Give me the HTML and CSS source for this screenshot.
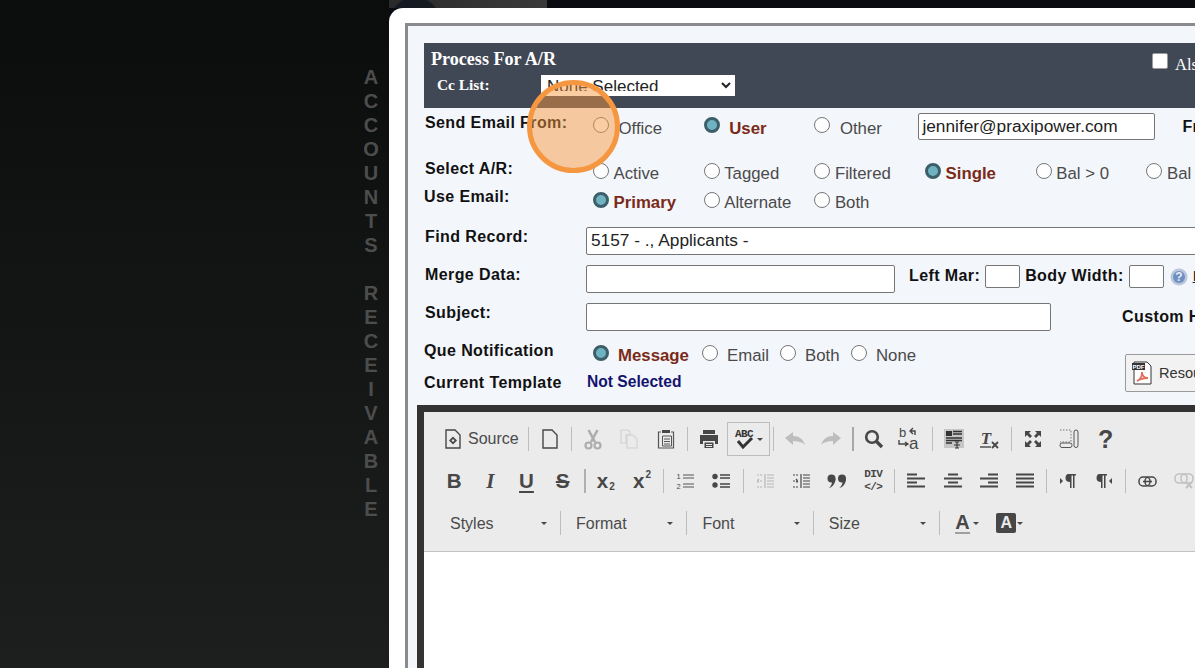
FILE: index.html
```html
<!DOCTYPE html>
<html lang="en">
<head>
<meta charset="utf-8">
<title>Process For A/R</title>
<link rel="stylesheet" href="styles.css">
</head>
<body>
<div class="stage">
  <aside class="side">
    <span>A</span><span>C</span><span>C</span><span>O</span><span>U</span><span>N</span><span>T</span><span>S</span><span>&nbsp;</span><span>R</span><span>E</span><span>C</span><span>E</span><span>I</span><span>V</span><span>A</span><span>B</span><span>L</span><span>E</span>
  </aside>
  <div class="main">
    <div class="topstrip"><div class="strip-left"></div></div>
    <div class="modal">
      <div class="frame">
        <header class="head">
          <div class="head-left">
            <div class="title">Process For A/R</div>
            <div class="cc">
              <span class="cc-label">Cc List:</span>
              <select class="cc-select"><option>None Selected</option></select>
            </div>
          </div>
          <label class="also"><input type="checkbox" class="check"><span>Also send</span></label>
        </header>

        <div class="row row-send">
          <span class="lbl lift">Send Email From:</span>
          <span class="opt o1 gap10"><input type="radio" name="from" class="radio"><span class="otext">Office</span></span>
          <span class="opt o1 gap10"><input type="radio" name="from" class="radio" checked><span class="otext on">User</span></span>
          <span class="opt o2 gap10"><input type="radio" name="from" class="radio"><span class="otext">Other</span></span>
          <input class="field f-email" type="text" value="jennifer@praxipower.com">
          <span class="lbl from">From Name:</span>
        </div>

        <div class="row row-sel">
          <span class="lbl lift">Select A/R:</span>
          <span class="opt o1"><input type="radio" name="ar" class="radio"><span class="otext">Active</span></span>
          <span class="opt o1"><input type="radio" name="ar" class="radio"><span class="otext">Tagged</span></span>
          <span class="opt o1"><input type="radio" name="ar" class="radio"><span class="otext">Filtered</span></span>
          <span class="opt o1"><input type="radio" name="ar" class="radio" checked><span class="otext on">Single</span></span>
          <span class="opt o1"><input type="radio" name="ar" class="radio"><span class="otext">Bal &gt; 0</span></span>
          <span class="opt o1"><input type="radio" name="ar" class="radio"><span class="otext">Bal &lt; 0</span></span>
        </div>

        <div class="row row-use">
          <span class="lbl lift">Use Email:</span>
          <span class="opt o1"><input type="radio" name="use" class="radio" checked><span class="otext on">Primary</span></span>
          <span class="opt o1"><input type="radio" name="use" class="radio"><span class="otext">Alternate</span></span>
          <span class="opt o1"><input type="radio" name="use" class="radio"><span class="otext">Both</span></span>
        </div>

        <div class="row row-find">
          <span class="lbl lift">Find Record:</span>
          <input class="field f-find" type="text" value="5157 - ., Applicants -">
        </div>

        <div class="row row-field">
          <span class="lbl lift">Merge Data:</span>
          <input class="field f-merge" type="text">
          <span class="lbl left-mar">Left Mar:</span>
          <input class="field f-small" type="text">
          <span class="lbl body-w">Body Width:</span>
          <input class="field f-small" type="text">
          <svg class="help" width="18" height="18" viewBox="0 0 18 18" aria-hidden="true"><circle cx="9" cy="9" r="8.5" fill="#b9c6dc"/><circle cx="9" cy="9" r="6" fill="#6f8fc2"/><text x="9" y="13" text-anchor="middle" class="help-q">?</text></svg>
          <span class="help-link">Help</span>
        </div>

        <div class="row row-field">
          <span class="lbl lift">Subject:</span>
          <input class="field f-subject" type="text">
          <span class="lbl custom">Custom Header</span>
        </div>

        <div class="bottom">
          <div class="bottom-left">
            <div class="row row-que">
              <span class="lbl lift">Que Notification</span>
              <span class="opt q1 gap9"><input type="radio" name="que" class="radio" checked><span class="otext on">Message</span></span>
              <span class="opt q2 gap9"><input type="radio" name="que" class="radio"><span class="otext">Email</span></span>
              <span class="opt q3 gap9"><input type="radio" name="que" class="radio"><span class="otext">Both</span></span>
              <span class="opt q4 gap9"><input type="radio" name="que" class="radio"><span class="otext">None</span></span>
            </div>
            <div class="row row-tpl">
              <span class="lbl">Current Template</span>
              <span class="not-sel">Not Selected</span>
            </div>
          </div>
          <button class="res-btn" type="button">
            <svg width="22" height="24" viewBox="0 0 22 24" aria-hidden="true"><path d="M3 1h13l4 4v18H3z" fill="#fff" stroke="#333"/><rect x="1" y="2" width="13" height="7" fill="#333"/><text x="7.500" y="8" text-anchor="middle" class="pdf-t">PDF</text><path d="M6 20c3-1 5-5 5-9 0 4 2 6 6 6-4 0-8 1-11 3z" fill="none" stroke="#e0705f" stroke-width="1.800"/></svg>
            <span>Resources</span>
          </button>
        </div>

        <section class="editor">
          <div class="toolbar">
            <div class="tb-row">
              <span class="b b-source">
                <svg width="16" height="20" viewBox="0 0 16 20"><path d="M1 1h9l5 5v13H1z" class="ln"/><path d="M8 7.500l4 4-4 4-4-4z" fill="#474747"/><path d="M8 10l1.500 1.500L8 13l-1.500-1.500z" fill="#ebebeb"/></svg>
                <span class="b-text">Source</span>
              </span>
              <i class="s"></i>
              <span class="b"><svg width="16" height="20" viewBox="0 0 16 20"><path d="M1 1h9l5 5v13H1z" class="ln"/></svg></span>
              <i class="s"></i>
              <span class="b"><svg width="18" height="21" viewBox="0 0 18 21"><path d="M4.500 1l6.500 12M13.500 1L7 13" stroke="#adadad" stroke-width="2.600" fill="none"/><circle cx="4.500" cy="16.500" r="3" fill="none" stroke="#adadad" stroke-width="2.200"/><circle cx="13.500" cy="16.500" r="3" fill="none" stroke="#adadad" stroke-width="2.200"/></svg></span>
              <span class="b"><svg width="18" height="20" viewBox="0 0 18 20"><path d="M1 1h7l2 2v3H6v8H1z" fill="none" stroke="#d2d2d2" stroke-width="1.200"/><path d="M7 6h6l4 4v9H7z" fill="none" stroke="#d2d2d2" stroke-width="1.200"/></svg></span>
              <span class="b"><svg width="18" height="22" viewBox="0 0 18 22"><path d="M4 4H1.500v16h15V4H14" fill="none" stroke="#555" stroke-width="1.200"/><path d="M5 2h8v3H5z" fill="#474747"/><path d="M5.500 8h9v10h-9z" fill="none" stroke="#555" stroke-width="1"/><path d="M7 11h6M7 13.500h6M7 16h6" stroke="#555" stroke-width="1"/></svg></span>
              <i class="s"></i>
              <span class="b"><svg width="20" height="19" viewBox="0 0 20 19"><path d="M4 0h12v4H4zM1 5h18v9h-3v-3H4v3H1z" fill="#474747"/><path d="M5.500 12.500h9V18h-9z" fill="#474747"/><path d="M7 14h6v1H7zM7 16h6v1H7z" fill="#ebebeb"/></svg></span>
              <span class="b b-spell">
                <svg width="22" height="26" viewBox="0 0 22 26"><text x="10" y="11" text-anchor="middle" class="abc">ABC</text><path d="M4 15l5 6 9-9" fill="none" stroke="#333" stroke-width="3"/></svg>
                <i class="arrow"></i>
              </span>
              <i class="s"></i>
              <span class="b"><svg width="20" height="14" viewBox="0 0 20 14"><path d="M0 6l8-6v4c6 0 10 3 12 9-3-3-7-4-12-4v4z" fill="#bdbdbd"/></svg></span>
              <span class="b"><svg width="20" height="14" viewBox="0 0 20 14"><path d="M20 6l-8-6v4C6 4 2 7 0 13c3-3 7-4 12-4v4z" fill="#bdbdbd"/></svg></span>
              <i class="s s-dark"></i>
              <span class="b"><svg width="20" height="20" viewBox="0 0 20 20"><circle cx="8" cy="8" r="5.800" fill="none" stroke="#474747" stroke-width="2.600"/><path d="M12 12l6 6" stroke="#474747" stroke-width="3.400"/></svg></span>
              <span class="b b-rep"><svg width="22" height="24" viewBox="0 0 22 24"><text x="1" y="10" class="rep">b</text><text x="11" y="22" class="rep rep-a">a</text><path d="M15 1l-3 3 3 3M12 4h5v4" fill="none" stroke="#474747" stroke-width="1.400"/><path d="M7 19l3-2-3-2M1 13v4h8" fill="none" stroke="#474747" stroke-width="1.400"/></svg></span>
              <i class="s"></i>
              <span class="b"><svg width="20" height="20" viewBox="0 0 20 20"><rect width="20" height="19" fill="#c6c6c6"/><path d="M2 2h6v5H2z" fill="#333"/><path d="M9 2.500h9M9 5h9M2 9h16M2 11.500h16M2 14h6" stroke="#333" stroke-width="1.400"/><path d="M10 16h6M13 13v6M11 13h4M11 19h4" stroke="#333" stroke-width="1.100"/></svg></span>
              <span class="b"><svg width="20" height="20" viewBox="0 0 20 20"><text x="6" y="15" text-anchor="middle" class="tx">T</text><path d="M0 18h11" stroke="#474747" stroke-width="1.400"/><path d="M12 13l6 6M18 13l-6 6" stroke="#474747" stroke-width="1.800"/></svg></span>
              <i class="s"></i>
              <span class="b"><svg width="18" height="18" viewBox="0 0 18 18"><path d="M1 1h6L5 3l3 3-2 2-3-3-2 2zM17 1h-6l2 2-3 3 2 2 3-3 2 2zM1 17h6l-2-2 3-3-2-2-3 3-2-2zM17 17h-6l2-2-3-3 2-2 3 3 2-2z" fill="#474747"/></svg></span>
              <span class="b"><svg width="20" height="20" viewBox="0 0 20 20"><path d="M1 1h11v12H1" fill="none" stroke="#777" stroke-dasharray="1.500 1.500"/><rect x="1" y="14" width="12" height="4.500" rx="2" fill="none" stroke="#555"/><rect x="15" y="1" width="4" height="17.500" rx="2" fill="none" stroke="#555"/></svg></span>
              <span class="b b-q">?</span>
            </div>
            <div class="tb-row">
              <span class="b b-fmt">B</span>
              <span class="b b-fmt b-i">I</span>
              <span class="b b-fmt b-u">U</span>
              <span class="b b-fmt b-st">S</span>
              <i class="s s-strong"></i>
              <span class="b b-fmt b-x">x<sub>2</sub></span>
              <span class="b b-fmt b-x">x<sup>2</sup></span>
              <i class="s"></i>
              <span class="b"><svg width="18" height="18" viewBox="0 0 18 18"><text x="2.500" y="7" text-anchor="middle" class="num">1</text><text x="2.500" y="17" text-anchor="middle" class="num">2</text><path d="M7 3h11M7 6h11M7 12h11M7 15h11" stroke="#555" stroke-width="1.100"/></svg></span>
              <span class="b"><svg width="18" height="16" viewBox="0 0 18 16"><circle cx="3" cy="3.500" r="2.700" fill="#474747"/><circle cx="3" cy="12" r="2.700" fill="#474747"/><path d="M8 2h10M8 5h10M8 11h10M8 14h10" stroke="#474747" stroke-width="1.400"/></svg></span>
              <i class="s"></i>
              <span class="b"><svg width="18" height="16" viewBox="0 0 18 16"><path d="M9 1v14M11 2h7M11 5h7M11 8h7M11 11h7M11 14h7" stroke="#b5b5b5" stroke-width="1.200"/><path d="M6 8H1M3 6L1 8l2 2M1 2h5M1 14h5" fill="none" stroke="#b5b5b5" stroke-width="1.200" stroke-dasharray="2 1"/></svg></span>
              <span class="b"><svg width="18" height="16" viewBox="0 0 18 16"><path d="M9 1v14M11 2h7M11 5h7M11 8h7M11 11h7M11 14h7" stroke="#474747" stroke-width="1.200"/><path d="M1 8h5M4 6l2 2-2 2M1 2h5M1 14h5" fill="none" stroke="#474747" stroke-width="1.200" stroke-dasharray="2 1"/></svg></span>
              <span class="b"><svg width="20" height="14" viewBox="0 0 20 14"><circle cx="4.500" cy="4.500" r="4" fill="#474747"/><path d="M8.500 4.500C8.500 9 6 13 2 14c2-2 3-4 3-6z" fill="#474747"/><circle cx="15" cy="4.500" r="4" fill="#474747"/><path d="M19 4.500C19 9 16.500 13 12.500 14c2-2 3-4 3-6z" fill="#474747"/></svg></span>
              <span class="b b-div"><span>DIV</span><span>&lt;/&gt;</span></span>
              <i class="s"></i>
              <span class="b"><svg width="18" height="16" viewBox="0 0 18 16"><path d="M0 1.500h10M0 5.500h18M0 9.500h10M0 13.500h18" stroke="#474747" stroke-width="2"/></svg></span>
              <span class="b"><svg width="18" height="16" viewBox="0 0 18 16"><path d="M4 1.500h10M0 5.500h18M4 9.500h10M0 13.500h18" stroke="#474747" stroke-width="2"/></svg></span>
              <span class="b"><svg width="18" height="16" viewBox="0 0 18 16"><path d="M8 1.500h10M0 5.500h18M8 9.500h10M0 13.500h18" stroke="#474747" stroke-width="2"/></svg></span>
              <span class="b"><svg width="18" height="16" viewBox="0 0 18 16"><path d="M0 1.500h18M0 5.500h18M0 9.500h18M0 13.500h18" stroke="#474747" stroke-width="2"/></svg></span>
              <i class="s"></i>
              <span class="b"><svg width="16" height="16" viewBox="0 0 16 16"><path d="M0 5l3 3-3 3z" fill="#474747"/><path d="M8 1h8v1.500h-1.500V15H13V2.500h-1.500V15H10V9C7 9 5.500 7.500 5.500 5S7 1 8 1z" fill="#474747"/></svg></span>
              <span class="b"><svg width="16" height="16" viewBox="0 0 16 16"><path d="M3 1h8v1.500H9.500V15H8V2.500H6.500V15H5V9C2 9 .5 7.500.5 5S2 1 3 1z" fill="#474747"/><path d="M16 5l-3 3 3 3z" fill="#474747"/></svg></span>
              <i class="s"></i>
              <span class="b"><svg width="19" height="11" viewBox="0 0 19 11"><rect x="1" y="1" width="11" height="9" rx="4" fill="none" stroke="#474747" stroke-width="1.500"/><rect x="7" y="1" width="11" height="9" rx="4" fill="none" stroke="#474747" stroke-width="1.500"/><path d="M5 5.500h9" stroke="#474747" stroke-width="1.500"/></svg></span>
              <span class="b"><svg width="20" height="16" viewBox="0 0 20 16"><rect x="1" y="1" width="12" height="9" rx="4" fill="none" stroke="#c2c2c2" stroke-width="1.600"/><rect x="7" y="1" width="12" height="9" rx="4" fill="none" stroke="#c2c2c2" stroke-width="1.600"/><path d="M12 9l6 6M18 9l-6 6" stroke="#c2c2c2" stroke-width="2"/></svg></span>
            </div>
            <div class="tb-row">
              <span class="combo combo-first">Styles<i class="arrow"></i></span>
              <i class="s s-tall"></i>
              <span class="combo">Format<i class="arrow"></i></span>
              <i class="s s-tall"></i>
              <span class="combo">Font<i class="arrow"></i></span>
              <i class="s s-tall"></i>
              <span class="combo">Size<i class="arrow"></i></span>
              <i class="s s-tall"></i>
              <span class="b b-color"><span class="color-a">A</span><i class="arrow"></i></span>
              <span class="b b-color2"><span class="color-bg">A</span><i class="arrow"></i></span>
            </div>
          </div>
          <div class="edit-area"></div>
        </section>
      </div>
    </div>
  </div>
</div>
<div class="marker"></div>
</body>
</html>
```
FILE: styles.css
```css
* { box-sizing: border-box; }
html, body { margin: 0; height: 100%; overflow: hidden; }
body { background: #0c0d0e; font-family: "Liberation Sans", Arial, sans-serif; }
.stage { display: flex; width: 1195px; height: 668px; overflow: hidden; }

.side {
  width: 389px; flex: none; display: flex; flex-direction: column; align-items: flex-end;
  padding: 65px 8px 0 0;
  background: linear-gradient(180deg, #0b0c0c 0%, #141616 50%, #1d1f1f 100%);
}
.side span { width: 20px; height: 24px; line-height: 24px; text-align: center; font-size: 20px; font-weight: 700; color: #4d4d4d; }

.main { flex: 1; min-width: 0; display: flex; flex-direction: column; background: #090b10; }
.topstrip { height: 8px; flex: none; }
.strip-left {
  width: 158px; height: 8px;
  background: radial-gradient(circle 26px at 26px 22px, #141a22 0 24px, transparent 26px), linear-gradient(90deg, #2a2a2a, #3a3a3a);
}
.modal { flex: 1; background: #fff; border-top-left-radius: 14px; padding: 15px 0 0 16px; overflow: hidden; }
.frame { width: 1100px; height: 700px; background: #f3f6fb; border-top: 3px solid #8b8b8f; border-left: 3px solid #8b8b8f; padding: 17px 0 0 16px; }

.head { display: flex; justify-content: space-between; height: 65px; width: 1000px; background: #414855; color: #fff; font-family: "Liberation Serif", "Times New Roman", serif; font-weight: 700; }
.head-left { padding: 6px 0 0 7px; }
.title { font-size: 18.1px; line-height: 20px; }
.cc { display: flex; align-items: center; margin-top: 6px; padding-left: 6px; }
.cc-label { width: 104px; font-size: 15.4px; margin-bottom: 2px; }
.cc-select { width: 194px; height: 21px; font: 400 17px "Liberation Sans", Arial, sans-serif; color: #222; background: #fff; border: 1px solid #fff; padding: 0 0 4px 1px; border-radius: 0; }
.also { display: flex; align-items: flex-start; width: 272px; padding-top: 10px; flex: none; gap: 7px; font-weight: 400; font-size: 16.5px; line-height: 24px; white-space: nowrap; }
.check { appearance: none; width: 16px; height: 16px; margin: 0; background: #fff; border: 1px solid #9a9a9a; border-radius: 2px; flex: none; }

.row { display: flex; align-items: center; width: 1000px; white-space: nowrap; }
.lbl { font-size: 16px; font-weight: 700; color: #111; letter-spacing: .4px; flex: none; }
.row > .lbl:first-child { width: 162px; padding-left: 1px; }
.lift { margin-bottom: 4px; }
.row-send { height: 34px; }
.row-sel { height: 28px; margin-top: 15px; }
.row-use { height: 28px; margin-top: 1px; }
.row-find { height: 28px; margin-top: 13px; }
.row-field { height: 28px; margin-top: 10px; align-items: flex-start; }
.row-field > .lift, .row-find > .lift { margin: 0; line-height: 20px; }
.row-find { align-items: flex-start; }
.row-que { height: 28px; }
.row-tpl { height: 28px; margin-top: 2px; }

.row-send > .lbl:first-child, .row-sel > .lbl:first-child, .row-use > .lbl:first-child, .row-que > .lbl:first-child { margin-right: 7px; }
.row-use > .lbl:first-child, .row-que > .lbl:first-child, .row-tpl > .lbl:first-child { padding-left: 0; }
.row-use > .lift { margin-bottom: 6px; }

.opt { display: flex; align-items: center; flex: none; gap: 4.5px; }
.o1 { width: 110.7px; }
.o2 { width: 104px; }
.gap10 { gap: 9.5px; }
.gap9 { gap: 9px; }
.q1 { width: 109px; }
.q2 { width: 78px; }
.q3 { width: 71px; }
.q4 { width: 80px; }
.otext { font-size: 16.8px; color: #4a4a4a; margin-top: 5px; }
.gap10 .otext { margin-top: 8px; }
.gap9 .otext { margin-top: 6px; }
.otext.on { font-weight: 700; color: #7a2a18; }
.radio { appearance: none; width: 16px; height: 16px; margin: 0; border: 1.5px solid #767676; border-radius: 50%; background: #fff; flex: none; }
.radio:checked { background: #6fb2c1; border: 3px solid #3d5f6a; }

.field { height: 28px; border: 1px solid #767676; border-radius: 2px; background: #fff; padding: 0 4px; font: 400 17.3px "Liberation Sans", Arial, sans-serif; color: #222; flex: none; }
.f-email { width: 237px; height: 27px; margin-top: 3px; padding: 0 3px; }
.from { margin-left: 27px; margin-top: 3px; }
.f-find { width: 800px; }
.f-find { padding-bottom: 2px; }
.f-merge { width: 309px; }
.left-mar { margin: 0 5px 0 14px; line-height: 21px; }
.body-w { margin: 0 5px; line-height: 21px; }
.f-small { width: 35px; height: 23px; }
.help { margin: 3px 0 0 6px; flex: none; }
.help-q { font: 700 12px "Liberation Sans", Arial, sans-serif; fill: #e8edf6; }
.help-link { margin: 2px 0 0 5px; font-size: 15px; color: #222; text-decoration: underline; }
.f-subject { width: 465px; }
.custom { margin: 5px 0 0 71px; }

.bottom { display: flex; margin-top: 8px; width: 1000px; height: 66px; }
.bottom-left { width: 701px; flex: none; }
.row-tpl .lbl { line-height: 28px; }
.not-sel { font-size: 15.6px; font-weight: 700; color: #14146e; margin-bottom: 2px; padding-left: 1px; }
.res-btn { display: flex; align-items: center; gap: 6px; width: 140px; height: 38px; margin-top: 15px; padding: 0 0 0 5px; background: #f2f2f2; border: 1px solid #9a9a9a; border-radius: 2px; font: 400 14.6px "Liberation Sans", Arial, sans-serif; color: #333; flex: none; }
.pdf-t { font: 700 6px "Liberation Sans", Arial, sans-serif; fill: #fff; }

.editor { margin-left: -7px; width: 1000px; height: 300px; border-top: 7px solid #333; border-left: 7px solid #333; background: #fff; }
.toolbar { height: 140px; padding: 6px 0 8px 12px; background: #ebebeb; border-bottom: 1px solid #c4c4c4; }
.tb-row { display: flex; align-items: center; height: 42px; }
.b { width: 36.2px; height: 34px; display: flex; align-items: center; justify-content: center; flex: none; color: #474747; }
.s { width: 1px; height: 24px; margin: 0 3px; background: #bcbcbc; flex: none; }
.s-strong { width: 2px; height: 24px; margin-right: 2px; background: #b0b0b0; }
.s-dark { background: #a8a8a8; width: 2px; margin-right: 2px; }
.s-tall { height: 24px; }
.ln { fill: none; stroke: #474747; stroke-width: 1.400; }
.b-source { width: 89px; justify-content: flex-start; padding-left: 9px; gap: 7px; }
.b-text { font-size: 16px; color: #4a4a4a; }
.b-spell { width: 43px; border: 1px solid #bcbcbc; gap: 1px; }
.b-rep svg { margin-right: 4px; }
.arrow { display: block; width: 0; height: 0; border-top: 3px solid #474747; border-left: 3px solid transparent; border-right: 3px solid transparent; flex: none; }
.abc { font: 700 11px "Liberation Mono", monospace; letter-spacing: -.6px; fill: #333; }
.rep { font: 400 13px "Liberation Sans", Arial, sans-serif; fill: #474747; }
.rep-a { font-size: 17px; }
.tx { font: italic 700 17px "Liberation Serif", serif; fill: #474747; }
.num { font: 400 7.500px "Liberation Sans", Arial, sans-serif; fill: #474747; }
.b-q { font-size: 25px; font-weight: 700; }
.b-fmt { font-size: 20.500px; font-weight: 700; }
.b-i { font-family: "Liberation Serif", serif; font-style: italic; font-size: 21px; }
.b-u { text-decoration: underline; text-underline-offset: 3px; }
.b-st { text-decoration: line-through; }
.b-x { gap: 1px; }
.b-x sub, .b-x sup { font-size: 10px; font-weight: 700; line-height: 0; }
.b-x sub { margin-top: 12px; }
.b-x sup { margin-bottom: 12px; }
.b-div { flex-direction: column; font: 700 11px/13px "Liberation Mono", monospace; letter-spacing: -.6px; }
.combo { width: 119.4px; height: 30px; margin-top: 1px; display: flex; align-items: center; justify-content: space-between; padding: 0 10px 0 12px; flex: none; font-size: 16px; color: #4a4a4a; }
.combo-first { width: 121px; padding-left: 14px; }
.b-color { width: 44px; justify-content: flex-start; padding-left: 12px; gap: 3px; }
.color-a { font-size: 20px; font-weight: 700; border-bottom: 2px solid #a0a0a0; line-height: 19px; }
.b-color2 { width: 40px; justify-content: flex-start; gap: 1px; margin-left: 9px; }
.color-bg { width: 20px; height: 20px; background: #474747; color: #ebebeb; border-radius: 2px; font-size: 16px; font-weight: 700; line-height: 20px; text-align: center; flex: none; }
.edit-area { height: 160px; background: #fff; }

.marker { position: absolute; left: 527px; top: 80px; width: 93px; height: 93px; border-radius: 50%; border: 5px solid #f59640; background: rgba(246, 150, 60, .48); }
```
